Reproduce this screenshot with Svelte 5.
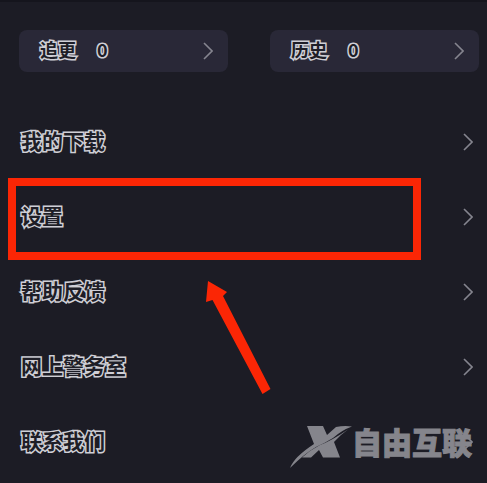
<script>
  let stats = [
    { label: "追更", count: 0 },
    { label: "历史", count: 0 },
  ];

  let items = [
    { label: "我的下载" },
    { label: "设置", marked: true },
    { label: "帮助反馈" },
    { label: "网上警务室" },
    { label: "联系我们", branded: true },
  ];
</script>

<style>
  :global(body) {
    background: #1c1c25;
  }

  main {
    box-sizing: border-box;
    min-height: 100vh;
    border-top: 2px solid #15151d;
    padding-top: 28px;
    font-family: "Noto Sans CJK SC", sans-serif;
    font-weight: 700;
    overflow: hidden;
  }

  button {
    display: flex;
    align-items: center;
    border: 0;
    margin: 0;
    background: none;
    font: inherit;
    text-align: left;
    cursor: pointer;
  }

  .stats {
    display: grid;
    grid-template-columns: 1fr 1fr;
    gap: 42px;
    padding: 0 8px 0 19px;
  }

  .stats button {
    height: 42px;
    padding: 0 15px 0 21px;
    border-radius: 8px;
    background: #292837;
    font-size: 18px;
  }

  .outlined {
    margin-bottom: 4px;
    color: #1e1e27;
    -webkit-text-stroke: 3px #cfcfd6;
    paint-order: stroke fill;
  }

  .count {
    margin-left: 21px;
  }

  .chevron {
    width: 10px;
    height: 18px;
    margin-left: auto;
    fill: none;
    stroke: #85858f;
    stroke-width: 1.6;
  }

  ul {
    list-style: none;
    margin: 32px 0 0;
    padding: 0;
  }

  li {
    position: relative;
  }

  li button {
    width: 100%;
    height: 75px;
    padding: 0 14px 0 21px;
    font-size: 21px;
  }

  .frame {
    position: absolute;
    box-sizing: border-box;
    top: -1px;
    left: 8px;
    right: 66px;
    height: 82px;
    border: 8px solid #fb2605;
    pointer-events: none;
  }

  .arrow {
    position: absolute;
    top: 101px;
    left: 204px;
    width: 68px;
    height: 116px;
    fill: #fb2605;
    pointer-events: none;
    z-index: 1;
  }

  .brand {
    position: absolute;
    top: 17px;
    right: 15px;
    display: flex;
    align-items: flex-start;
    color: #85858c;
    font-size: 30px;
    font-weight: 900;
    line-height: 40px;
    -webkit-text-stroke: 1px #85858c;
    pointer-events: none;
  }

  .brand svg {
    width: 64px;
    height: 48px;
    margin-right: -2px;
    fill: currentColor;
  }
</style>

<main>
  <div class="stats">
    {#each stats as stat}
      <button type="button">
        <span class="outlined">{stat.label}</span>
        <span class="outlined count">{stat.count}</span>
        <svg class="chevron" viewBox="0 0 10 18" aria-hidden="true">
          <path d="M1 1L9 9L1 17" />
        </svg>
      </button>
    {/each}
  </div>

  <ul>
    {#each items as item}
      <li>
        <button type="button">
          <span class="outlined">{item.label}</span>
          <svg class="chevron" viewBox="0 0 10 18" aria-hidden="true">
            <path d="M1 1L9 9L1 17" />
          </svg>
        </button>
        {#if item.marked}
          <div class="frame"></div>
          <svg class="arrow" viewBox="0 0 68 116" aria-hidden="true">
            <path d="M4 1L23 12L19 16L66.500 109L58.500 114L8.500 20L2 22Z" />
          </svg>
        {/if}
        {#if item.branded}
          <div class="brand">
            <svg viewBox="0 0 64 48" aria-hidden="true">
              <path d="M17 5H33L37 14L46 6Q54 4.500 62 5.500Q52 9 43 17Q35 22 26 26Q14 33 0 47Q4 36 24 23Z" />
              <path d="M58 8.500Q50 14 44 21L50 36.500H33L29 29L21 36.500H12Q20 29 30 24Q41 20 58 8.500Z" />
            </svg>
            <span>自由互联</span>
          </div>
        {/if}
      </li>
    {/each}
  </ul>
</main>
